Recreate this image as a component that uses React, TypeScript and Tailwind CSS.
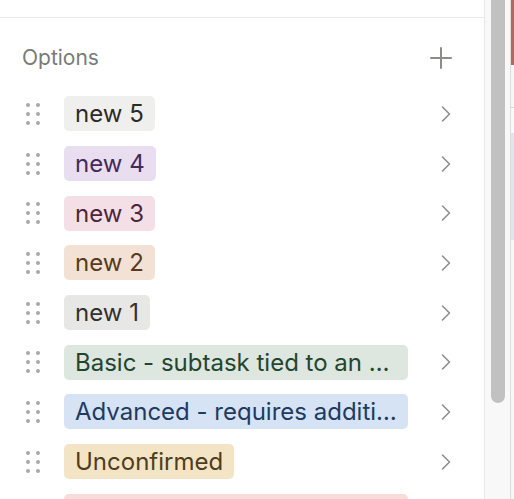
import React from "react";

type Option = {
  label: string;
  bg: string;
  fg: string;
};

const options: Option[] = [
  { label: "new 5", bg: "bg-[#efefee]", fg: "text-[#2c2b29]" },
  { label: "new 4", bg: "bg-[#e8def0]", fg: "text-[#452a58]" },
  { label: "new 3", bg: "bg-[#f4dfe7]", fg: "text-[#4d2739]" },
  { label: "new 2", bg: "bg-[#f3e1d5]", fg: "text-[#573a20]" },
  { label: "new 1", bg: "bg-[#e7e7e6]", fg: "text-[#32312f]" },
  { label: "Basic - subtask tied to an existing feature", bg: "bg-[#dde6df]", fg: "text-[#234530]" },
  { label: "Advanced - requires additional work", bg: "bg-[#d6e3f5]", fg: "text-[#203a60]" },
  { label: "Unconfirmed", bg: "bg-[#f2e4c5]", fg: "text-[#4f3d1c]" },
  { label: "Blocked - waiting on another team", bg: "bg-[#f7ddd9]", fg: "text-[#5d2a22]" },
];

const DragHandle = () => (
  <div className="grid grid-cols-2 gap-x-[5px] gap-y-[5px] w-[14px] shrink-0">
    {Array.from({ length: 6 }).map((_, i) => (
      <span key={i} className="block w-[4px] h-[4px] rounded-full bg-[#a9a8a6]" />
    ))}
  </div>
);

const Chevron = () => (
  <svg width="12" height="18" viewBox="0 0 12 18" fill="none" className="shrink-0">
    <path d="M2.5 2 L9.5 9 L2.5 16" stroke="#8f8f8d" strokeWidth="1.6" strokeLinecap="round" strokeLinejoin="round" />
  </svg>
);

const PlusIcon = () => (
  <svg width="22" height="22" viewBox="0 0 22 22" fill="none">
    <path d="M11 1 V21 M1 11 H21" stroke="#8c8c8a" strokeWidth="2" strokeLinecap="round" />
  </svg>
);

function OptionRow({ option }: { option: Option }) {
  return (
    <div className="flex items-center h-[49.7px] shrink-0 pl-[26px] pr-[32px]">
      <DragHandle />
      <div className="flex-1 min-w-0 pl-[24px] pr-[32px]">
        <span
          className={`inline-block max-w-full truncate align-middle h-[35px] leading-[35px] px-[11px] rounded-[5px] text-[24px] ${option.bg} ${option.fg}`}
        >
          {option.label}
        </span>
      </div>
      <Chevron />
    </div>
  );
}

export default function App() {
  return (
    <div className="flex w-[514px] h-[499px] overflow-hidden bg-white font-['Inter',sans-serif]">
      {/* property panel */}
      <div className="flex flex-col w-[484px] shrink-0 bg-white">
        <div className="h-[18px] shrink-0 border-b border-[#ebebea]" />
        <div className="flex items-center justify-between h-[71px] shrink-0 pt-[9px] pl-[22px] pr-[32px]">
          <span className="text-[21px] text-[#7b7a76]">Options</span>
          <PlusIcon />
        </div>
        {options.map((o) => (
          <OptionRow key={o.label} option={o} />
        ))}
      </div>

      {/* scroll gutter */}
      <div className="flex w-[26px] shrink-0 border-l border-[#e8e8e8] bg-[#f8f8f8]">
        <div className="w-[6px]" />
        <div className="w-[14px] h-[403px] bg-[#c1c1c1] rounded-b-full" />
      </div>

      {/* page behind */}
      <div className="flex flex-col flex-1 border-l border-[#dcdcdc]">
        <div className="h-[65px] bg-[#b4675c]" />
        <div className="h-[43px] bg-[#f6f6f6] border-b border-[#d6d6d6]" />
        <div className="h-[25px] bg-[#f9f9f9]" />
        <div className="h-[107px] bg-[#dfe5ef]" />
        <div className="flex-1 bg-[#f7f7f7]" />
      </div>
    </div>
  );
}
